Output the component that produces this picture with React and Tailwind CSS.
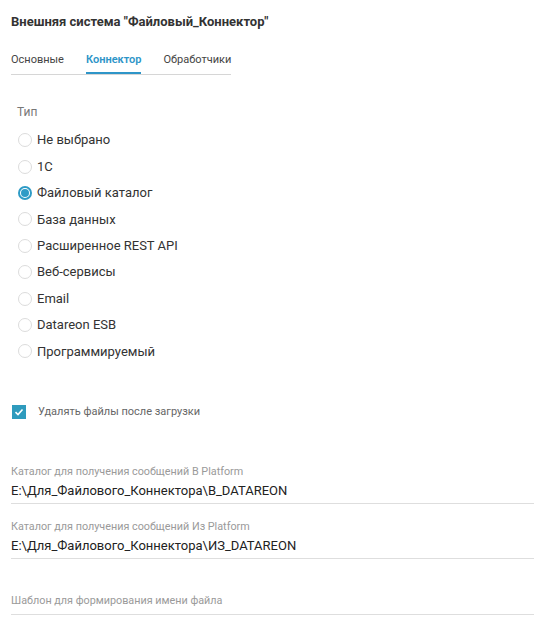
import React from 'react';

const types = [
  'Не выбрано',
  '1С',
  'Файловый каталог',
  'База данных',
  'Расширенное REST API',
  'Веб-сервисы',
  'Email',
  'Datareon ESB',
  'Программируемый',
];

function Radio({ label, checked }) {
  return (
    <div className="flex items-center h-[26.4px]">
      <span
        className={`w-[14px] h-[14px] rounded-full border flex items-center justify-center ${
          checked ? 'border-[#2e9bc6] border-2' : 'border-[#dcdcdc]'
        }`}
      >
        {checked && <span className="w-[8px] h-[8px] rounded-full bg-[#2e9bc6]" />}
      </span>
      <span className="ml-[5px] text-[13px] text-[#333]">{label}</span>
    </div>
  );
}

function Field({ label, value }) {
  return (
    <div className="border-b border-[#dedede] pb-[4px]">
      <div className="text-[10.8px] text-[#9a9a9a] leading-[14px]">{label}</div>
      <div className="text-[13px] text-[#222] leading-[16px] mt-[4px]">{value}</div>
    </div>
  );
}

export default function App() {
  return (
    <div className="w-[534px] h-[640px] bg-white font-['Roboto',sans-serif] pl-[11px] overflow-hidden">
      <div className="pt-[14px] text-[13px] font-bold text-[#333] leading-[16px]">
        Внешняя система "Файловый_Коннектор"
      </div>

      {/* Tabs */}
      <div className="mt-[23px] w-[220px] border-b border-[#d6d6d6] flex text-[11px] leading-[14px]">
        <div className="pb-[7px] text-[#444]">Основные</div>
        <div className="pb-[5px] ml-[22px] text-[#2e95c8] font-semibold border-b-2 border-[#2e95c8]">Коннектор</div>
        <div className="pb-[7px] ml-[22px] text-[#444]">Обработчики</div>
      </div>

      {/* Type */}
      <div className="pl-[6px] mt-[30px]">
        <div className="text-[12px] text-[#777] leading-[14px]">Тип</div>
        <div className="mt-[8px] pl-[1px]">
          {types.map((t) => (
            <Radio key={t} label={t} checked={t === 'Файловый каталог'} />
          ))}
        </div>
      </div>

      {/* Checkbox */}
      <div className="mt-[39px] flex items-center">
        <span className="ml-[1px] w-[14px] h-[14px] bg-[#2e9bbd] flex items-center justify-center">
          <svg width="10" height="10" viewBox="0 0 10 10" fill="none">
            <path d="M1.5 5.2 L4 7.5 L8.5 2.5" stroke="white" strokeWidth="1.6" />
          </svg>
        </span>
        <span className="ml-[12px] text-[11px] text-[#666]">Удалять файлы после загрузки</span>
      </div>

      {/* Fields */}
      <div className="mt-[45px] flex flex-col">
        <Field label="Каталог для получения сообщений В Platform" value="E:\Для_Файлового_Коннектора\B_DATAREON" />
        <div className="mt-[16px]">
          <Field label="Каталог для получения сообщений Из Platform" value="E:\Для_Файлового_Коннектора\ИЗ_DATAREON" />
        </div>
        <div className="mt-[35px] border-b border-[#dedede] pb-[6px] text-[10.8px] text-[#9a9a9a] leading-[14px]">
          Шаблон для формирования имени файла
        </div>
      </div>
    </div>
  );
}
